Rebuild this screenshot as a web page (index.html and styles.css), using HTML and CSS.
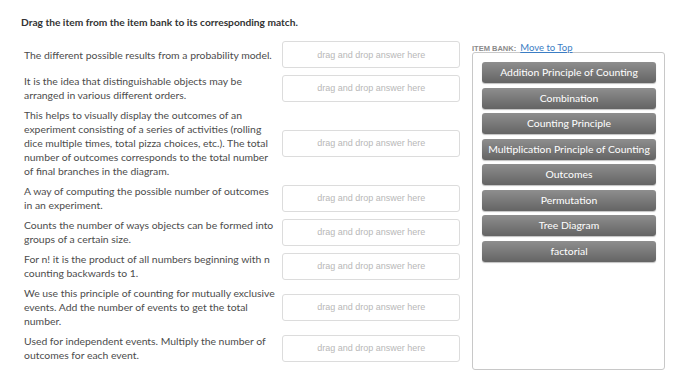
FILE: index.html
```html
<!DOCTYPE html>
<html>
<head>
<meta charset="utf-8">
<link rel="stylesheet" href="styles.css">
</head>
<body>
<div class="page">
  <h1 class="title">Drag the item from the item bank to its corresponding match.</h1>
  <div class="content">
    <div class="matches">
      <div class="row">
        <p class="desc">The different possible results from a probability model.</p>
        <div class="drop">drag and drop answer here</div>
      </div>
      <div class="row">
        <p class="desc">It is the idea that distinguishable objects may be arranged in various different orders.</p>
        <div class="drop">drag and drop answer here</div>
      </div>
      <div class="row">
        <p class="desc">This helps to visually display the outcomes of an experiment consisting of a series of activities (rolling dice multiple times, total pizza choices, etc.). The total number of outcomes corresponds to the total number of final branches in the diagram.</p>
        <div class="drop">drag and drop answer here</div>
      </div>
      <div class="row">
        <p class="desc">A way of computing the possible number of outcomes in an experiment.</p>
        <div class="drop">drag and drop answer here</div>
      </div>
      <div class="row">
        <p class="desc">Counts the number of ways objects can be formed into groups of a certain size.</p>
        <div class="drop">drag and drop answer here</div>
      </div>
      <div class="row">
        <p class="desc">For n! it is the product of all numbers beginning with n counting backwards to 1.</p>
        <div class="drop">drag and drop answer here</div>
      </div>
      <div class="row">
        <p class="desc">We use this principle of counting for mutually exclusive events. Add the number of events to get the total number.</p>
        <div class="drop">drag and drop answer here</div>
      </div>
      <div class="row">
        <p class="desc">Used for independent events. Multiply the number of outcomes for each event.</p>
        <div class="drop">drag and drop answer here</div>
      </div>
    </div>
    <div class="bank">
      <div class="bank-label"><span class="bank-title">ITEM BANK:</span> <a class="bank-link" href="#">Move to Top</a></div>
      <div class="bank-box">
        <div class="chip">Addition Principle of Counting</div>
        <div class="chip">Combination</div>
        <div class="chip">Counting Principle</div>
        <div class="chip">Multiplication Principle of Counting</div>
        <div class="chip">Outcomes</div>
        <div class="chip">Permutation</div>
        <div class="chip">Tree Diagram</div>
        <div class="chip">factorial</div>
      </div>
    </div>
  </div>
</div>
</body>
</html>
```

FILE: styles.css
```css
* { box-sizing: border-box; }
html, body { margin: 0; padding: 0; background: #fff; }
body {
  font-family: Lato, "Liberation Sans", sans-serif;
  color: #444;
  width: 680px;
  height: 390px;
  overflow: hidden;
}
.page {
  padding: 15px 0 0 21px;
}
.title {
  margin: 0;
  font-size: 10.2px;
  font-weight: bold;
  line-height: 14px;
  color: #333;
}
.content {
  display: flex;
  margin-top: 12px;
}
.matches {
  display: flex;
  flex-direction: column;
  gap: 6px;
  padding-left: 3px;
  width: 439px;
}
.row {
  display: flex;
  align-items: center;
  min-height: 27px;
}
.desc {
  margin: 0;
  width: 259px;
  padding-right: 4px;
  font-size: 10.4px;
  line-height: 14px;
  color: #4c4c4c;
}
.drop {
  width: 178px;
  height: 27px;
  border: 1px solid #dcdcdc;
  border-radius: 3px;
  display: flex;
  align-items: center;
  justify-content: center;
  font-family: "Liberation Sans", Arial, sans-serif;
  font-size: 9px;
  color: #b8b8b8;
}
.bank {
  margin-left: 12px;
  width: 193px;
}
.bank-label {
  height: 11px;
  line-height: 10px;
  margin-top: -1px;
}
.bank-title {
  font-family: "Liberation Sans", Arial, sans-serif;
  font-size: 7.5px;
  font-weight: bold;
  color: #8a8a8a;
}
.bank-link {
  font-size: 9.5px;
  color: #3b7dc4;
  text-decoration: underline;
}
.bank-box {
  margin-top: 1px;
  height: 318px;
  border: 1px solid #c8c8c8;
  border-radius: 3px;
  padding: 9px 8px 0 9px;
  display: flex;
  flex-direction: column;
  gap: 4.5px;
}
.chip {
  height: 21px;
  border-radius: 3px;
  background: linear-gradient(#8e8e8e, #646464);
  box-shadow: 0 1px 1px rgba(0,0,0,0.25);
  color: #fff;
  font-size: 10.4px;
  line-height: 20px;
  text-align: center;
  white-space: nowrap;
}
```
